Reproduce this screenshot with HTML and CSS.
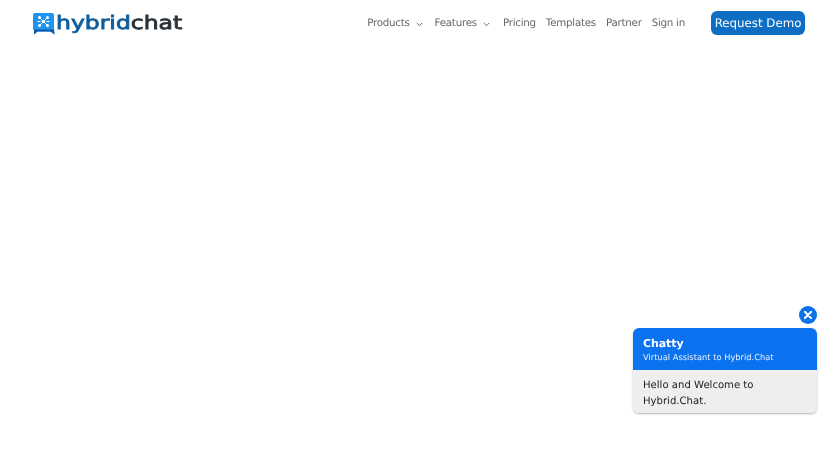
FILE: index.html
```html
<!DOCTYPE html>
<html lang="en">
<head>
<meta charset="utf-8">
<title>Hybrid.Chat</title>
<link rel="stylesheet" href="styles.css">
</head>
<body>
<header class="header">
  <a class="logo" href="#">
    <svg class="logo-icon" width="22" height="22" viewBox="0 0 22 22">
      <path d="M2 0h17a2 2 0 0 1 2 2v14l.5 5.500-4-3H4.500l-3.500 3 .5-4.500A2 2 0 0 1 0 16V2a2 2 0 0 1 2-2z" fill="#2093f0"/>
      <path d="M1 16.500h20v1l.5 4-4-3H4.500l-3.500 3z" fill="#0c5aa6"/>
      <g stroke="#fff" stroke-width="1"><path d="M6.500 4.500l8 8M14.500 4.500l-8 8M4.500 8.500h3M13.500 8.500h3"/></g>
      <g fill="#fff"><circle cx="6.500" cy="4.500" r="1.500"/><circle cx="14.500" cy="4.500" r="1.500"/><circle cx="6.500" cy="12.500" r="1.500"/><circle cx="14.500" cy="12.500" r="1.500"/><circle cx="10.500" cy="8.500" r="1.600"/></g>
    </svg>
    <span class="logo-text"><span class="logo-blue">hybrid</span><span class="logo-dark">chat</span></span>
  </a>
  <nav class="nav">
    <a class="nav-link" href="#">Products<svg class="chev" width="7" height="5" viewBox="0 0 7 5"><path d="M.8 1l2.700 2.700L6.200 1" fill="none" stroke="#666" stroke-width="1"/></svg></a>
    <a class="nav-link nav-link-wide" href="#">Features<svg class="chev" width="7" height="5" viewBox="0 0 7 5"><path d="M.8 1l2.700 2.700L6.200 1" fill="none" stroke="#666" stroke-width="1"/></svg></a>
    <a class="nav-link" href="#">Pricing</a>
    <a class="nav-link" href="#">Templates</a>
    <a class="nav-link" href="#">Partner</a>
    <a class="nav-link nav-link-last" href="#">Sign in</a>
    <a class="demo" href="#">Request Demo</a>
  </nav>
</header>
<aside class="chat">
  <button class="chat-close" type="button" aria-label="Close">
    <svg width="8" height="8" viewBox="0 0 10 10"><path d="M1 1l8 8M9 1l-8 8" stroke="#fff" stroke-width="2.400" stroke-linecap="round"/></svg>
  </button>
  <div class="chat-card">
    <div class="chat-head">
      <div class="chat-name">Chatty</div>
      <div class="chat-role">Virtual Assistant to Hybrid.Chat</div>
    </div>
    <div class="chat-body">Hello and Welcome to Hybrid.Chat.</div>
  </div>
</aside>
</body>
</html>
```
FILE: styles.css
```css
html, body { margin: 0; padding: 0; background: #fff; }
body { font-family: "DejaVu Sans", sans-serif; height: 472px; overflow: hidden; text-rendering: geometricPrecision; }
a { text-decoration: none; }

.header { display: flex; align-items: center; justify-content: space-between; height: 46px; padding: 0 35px 0 33px; will-change: transform; }
.logo { display: flex; align-items: center; gap: 1px; }
.logo-icon { display: block; margin-top: 2px; }
.logo-text { display: inline-block; font-weight: 400; font-size: 18.500px; line-height: 24px; margin-top: 1px; -webkit-text-stroke: 0.8px; transform: scaleX(1.27); transform-origin: left center; }
.logo-blue { color: #0f5e9e; }
.logo-dark { color: #2b3238; }

.nav { display: flex; align-items: center; }
.nav-link { color: #666; font-size: 10.300px; letter-spacing: -0.250px; margin-right: 10px; display: flex; align-items: center; }
.nav-link-wide { margin-right: 11px; }
.nav-link-last { margin-right: 26px; }
.chev { margin-left: 6px; margin-right: 2px; margin-top: 2px; }
.demo { width: 94px; text-align: center; background: #0d6ec4; color: #fff; font-size: 11.8px; height: 24px; line-height: 24px; border-radius: 6px; }

.chat { position: fixed; right: 23px; top: 306px; width: 185px; display: flex; flex-direction: column; align-items: flex-end; will-change: transform; }
.chat-close { width: 18px; height: 18px; border: 0; padding: 0; border-radius: 50%; background: #0b72e7; display: flex; align-items: center; justify-content: center; margin-bottom: 4px; }
.chat-card { width: 184.500px; border-radius: 6px; overflow: hidden; box-shadow: 0 1px 2px rgba(0,0,0,.3); }
.chat-head { background: #0b72f0; color: #fff; padding: 8px 10.500px 7px; height: 27px; }
.chat-name { font-weight: 700; font-size: 10.9px; line-height: 15px; }
.chat-role { font-size: 8.3px; line-height: 12px; color: #e6f0ff; }
.chat-body { background: #eee; color: #222; font-size: 10.1px; line-height: 16px; padding: 8px 30px 3px 10.500px; }
```
